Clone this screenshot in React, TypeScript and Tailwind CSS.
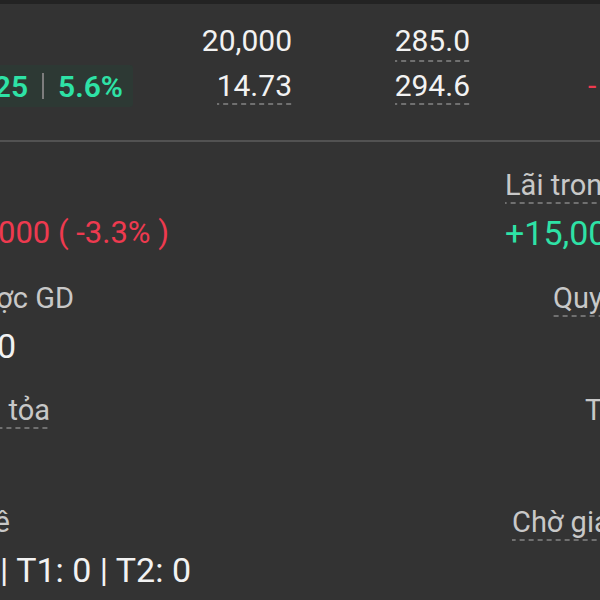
const dash =
  "bg-[linear-gradient(to_right,#707070_60%,transparent_60%)] bg-[length:9px_2px] bg-bottom bg-repeat-x";

function Label({ text, dashed = true }: { text: string; dashed?: boolean }) {
  return (
    <span
      className={`inline-block shrink-0 whitespace-nowrap pb-[3px] text-[29px] leading-[32px] text-[#c8c8c8] ${
        dashed ? dash : ""
      }`}
    >
      {text}
    </span>
  );
}

function Value({ text, color = "text-[#f2f2f2]" }: { text: string; color?: string }) {
  return (
    <span className={`inline-block shrink-0 whitespace-nowrap text-[34px] leading-[40px] ${color}`}>
      {text}
    </span>
  );
}

export default function App() {
  return (
    <div className="w-[600px] h-[600px] overflow-hidden bg-[#333333] font-['Roboto',sans-serif]">
      <div className="h-[4px] bg-[#232323]" />

      {/* Quote rows */}
      <div className="mt-[21px] flex h-[37px]">
        <div className="w-[133px] shrink-0" />
        <div className="w-[159px] shrink-0 flex justify-end">
          <span className="whitespace-nowrap text-[30px] leading-[32px] text-[#f2f2f2]">20,000</span>
        </div>
        <div className="w-[178px] shrink-0 flex justify-end">
          <span className={`whitespace-nowrap pb-[3px] text-[30px] leading-[32px] text-[#f2f2f2] ${dash}`}>
            285.0
          </span>
        </div>
      </div>

      <div className="mt-[3px] flex h-[42px]">
        <div className="w-[133px] shrink-0 flex justify-end bg-[#2d3934] rounded-r-[3px] pr-[10px]">
          <div className="shrink-0 flex items-center whitespace-nowrap text-[30px] font-semibold text-[#2ee2a6]">
            <span>+0.25</span>
            <span className="mx-[14px] h-[26px] w-[2px] bg-[#7d7d7d]" />
            <span>5.6%</span>
          </div>
        </div>
        <div className="w-[159px] shrink-0 flex justify-end pt-[5px]">
          <span className={`self-start whitespace-nowrap pb-[3px] text-[30px] leading-[32px] text-[#f2f2f2] ${dash}`}>
            14.73
          </span>
        </div>
        <div className="w-[178px] shrink-0 flex justify-end pt-[5px]">
          <span className={`self-start whitespace-nowrap pb-[3px] text-[30px] leading-[32px] text-[#f2f2f2] ${dash}`}>
            294.6
          </span>
        </div>
        <div className="pl-[118px] pt-[5px]">
          <span className="whitespace-nowrap text-[30px] leading-[32px] text-[#ee3a4f]">-</span>
        </div>
      </div>

      <div className="mt-[33px] h-[2px] bg-[#525252]" />

      {/* Account details */}
      <div className="pt-[27px] flex flex-col">
        <div className="flex">
          <div className="w-[505px] shrink-0 flex flex-col">
            <div className="w-[0px] flex justify-end">
              <Label text="Sức mua" />
            </div>
            <div className="mt-[9px] w-[169px] flex justify-end">
              <span className="inline-block shrink-0 whitespace-nowrap text-[31px] leading-[40px] text-[#ee3a4f]">
                -15,000 ( -3.3% )
              </span>
            </div>
          </div>
          <div className="flex flex-col items-start">
            <Label text="Lãi trong ngày" />
            <div className="mt-[9px]">
              <Value text="+15,000" color="text-[#2ee2a6]" />
            </div>
          </div>
        </div>

        <div className="mt-[29px] flex">
          <div className="w-[505px] shrink-0 flex flex-col">
            <div className="w-[74px] flex justify-end">
              <Label text="SL được GD" dashed={false} />
            </div>
            <div className="mt-[9px] w-[16px] flex justify-end">
              <Value text="0" />
            </div>
          </div>
          <div className="pl-[48px] flex flex-col items-start">
            <Label text="Quyền chờ về" />
          </div>
        </div>

        <div className="mt-[28px] flex">
          <div className="w-[505px] shrink-0 flex flex-col">
            <div className="w-[50px] flex justify-end">
              <Label text="Phong tỏa" />
            </div>
            <div className="mt-[9px] h-[40px]" />
          </div>
          <div className="pl-[80px] flex flex-col items-start">
            <Label text="Tổng" dashed={false} />
          </div>
        </div>

        <div className="mt-[28px] flex">
          <div className="w-[505px] shrink-0 flex flex-col">
            <div className="w-[10px] flex justify-end">
              <Label text="Chờ về" dashed={false} />
            </div>
            <div className="mt-[9px] w-[191px] flex justify-end">
              <Value text="T0: 0 | T1: 0 | T2: 0" />
            </div>
          </div>
          <div className="pl-[7px] flex flex-col items-start">
            <Label text="Chờ giao" />
          </div>
        </div>
      </div>
    </div>
  );
}
